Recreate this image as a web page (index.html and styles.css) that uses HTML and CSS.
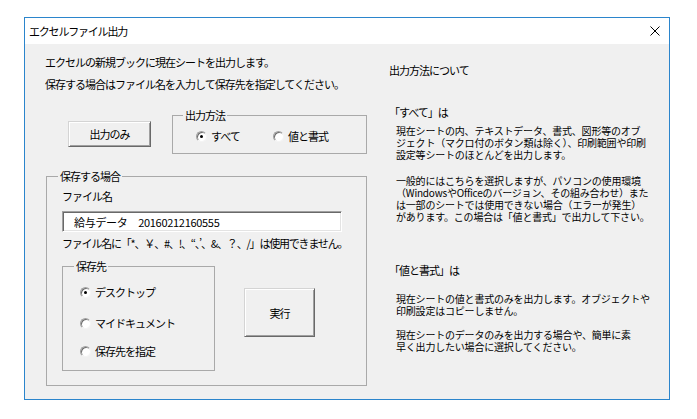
FILE: index.html
```html
<!DOCTYPE html>
<html lang="ja">
<head>
    <meta charset="UTF-8">
    <title>エクセルファイル出力</title>
    <link rel="stylesheet" href="styles.css">
</head>
<body>
    <div class="window">
        <div class="titlebar">
            <span class="title">エクセルファイル出力</span>
            <svg class="close" width="10" height="10" viewBox="0 0 10 10">
                <path d="M0.5 0.5L9.5 9.5M9.5 0.5L0.5 9.5" stroke="#000" stroke-width="1"/>
            </svg>
        </div>
        <div class="client">
            <div class="left">
                <p class="intro">エクセルの新規ブックに現在シートを出力します。<br>保存する場合はファイル名を入力して保存先を指定してください。</p>

                <div class="output-row">
                    <button class="btn btn-only">出力のみ</button>
                    <fieldset class="frame frame-method">
                        <legend>出力方法</legend>
                        <div class="method-options">
                            <label class="radio radio-all"><span class="dot checked"></span>すべて</label>
                            <label class="radio"><span class="dot"></span>値と書式</label>
                        </div>
                    </fieldset>
                </div>

                <fieldset class="frame frame-save">
                    <legend>保存する場合</legend>
                    <div class="save-body">
                        <div class="field-label">ファイル名</div>
                        <input class="filename" type="text" value="給与データ　20160212160555">
                        <div class="note">ファイル名に「*、￥、#、!、“、’、&amp;、？、/」は使用できません。</div>
                        <div class="dest-row">
                            <fieldset class="frame frame-dest">
                                <legend>保存先</legend>
                                <div class="dest-options">
                                    <label class="radio"><span class="dot checked"></span>デスクトップ</label>
                                    <label class="radio radio-docs"><span class="dot"></span>マイドキュメント</label>
                                    <label class="radio radio-pick"><span class="dot"></span>保存先を指定</label>
                                </div>
                            </fieldset>
                            <button class="btn btn-run">実行</button>
                        </div>
                    </div>
                </fieldset>
            </div>

            <div class="right">
                <div class="about-title">出力方法について</div>

                <div class="about-head head-all">「すべて」は</div>
                <p class="about-text text-first">現在シートの内、テキストデータ、書式、図形等のオブ<br>ジェクト（マクロ付のボタン類は除く）、印刷範囲や印刷<br>設定等シートのほとんどを出力します。</p>
                <p class="about-text text-second">一般的にはこちらを選択しますが、パソコンの使用環境<br>（WindowsやOfficeのバージョン、その組み合わせ）また<br>は一部のシートでは使用できない場合（エラーが発生）<br>があります。この場合は「値と書式」で出力して下さい。</p>

                <div class="about-head head-values">「値と書式」は</div>
                <p class="about-text text-third">現在シートの値と書式のみを出力します。オブジェクトや<br>印刷設定はコピーしません。</p>
                <p class="about-text text-fourth">現在シートのデータのみを出力する場合や、簡単に素<br>早く出力したい場合に選択してください。</p>
            </div>
        </div>
    </div>
</body>
</html>
```

FILE: styles.css
```css
body {
    margin: 0;
    background: #fff;
    font-family: "Noto Sans CJK JP", "Noto Sans", sans-serif;
    font-size: 11px;
    letter-spacing: -1px;
    color: #000;
}
.window {
    margin: 17px 0 0 24px;
    width: 646px;
    height: 383px;
    box-sizing: border-box;
    border: 1px solid #2b85cc;
    display: flex;
    flex-direction: column;
}
.titlebar {
    height: 26px;
    background: #fff;
    display: flex;
    align-items: center;
    justify-content: space-between;
    padding: 0 9px 0 4px;
}
.title {
    font-size: 11px;
    letter-spacing: -1.2px;
    line-height: 26px;
}
.close {
    display: block;
}
.client {
    flex: 1;
    background: #f0f0f0;
    display: flex;
}
.left {
    width: 345px;
    box-sizing: border-box;
    padding: 7px 0 0 20px;
}
.intro {
    margin: 0;
    line-height: 22px;
    white-space: nowrap;
}

/* frames */
.frame {
    margin: 0;
    padding: 0;
    min-width: 0;
    box-sizing: border-box;
    border: 1px solid #a9a9a9;
}
.frame legend {
    padding: 0 2px;
    line-height: 14px;
}

/* buttons */
.btn {
    box-sizing: border-box;
    background: #f0f0f0;
    font-family: inherit;
    font-size: 11px;
    letter-spacing: -1px;
    color: #000;
    border: 1px solid;
    border-color: #d4d4d4 #696969 #696969 #d4d4d4;
    box-shadow: inset 1px 1px 0 #fff, inset -1px -1px 0 #a0a0a0;
    padding: 0;
}

/* radio buttons */
.radio {
    display: flex;
    align-items: center;
    line-height: 14px;
    white-space: nowrap;
}
.dot {
    width: 11px;
    height: 11px;
    box-sizing: border-box;
    border-radius: 50%;
    border: 1px solid;
    border-color: #a0a0a0 #f4f4f4 #f4f4f4 #a0a0a0;
    box-shadow: inset 1px 1px 0 #6f6f6f;
    background: #fff;
    margin-right: 4px;
    position: relative;
}
.dot.checked::after {
    content: "";
    position: absolute;
    left: 3px;
    top: 3px;
    width: 3px;
    height: 3px;
    border-radius: 50%;
    background: #000;
}

.output-row {
    display: flex;
    align-items: flex-start;
    margin-top: 13px;
}
.btn-only {
    margin: 13px 0 0 23px;
    width: 83px;
    height: 26px;
}
.frame-method {
    margin-left: 21px;
    width: 195px;
    height: 46px;
}
.frame-method legend {
    margin-left: 10px;
}
.method-options {
    display: flex;
    padding: 7px 0 0 23px;
}
.radio-all {
    width: 77px;
}

.frame-save {
    margin: 15px 0 0 1px;
    width: 321px;
    height: 217px;
}
.frame-save legend {
    margin-left: 11px;
}
.save-body {
    padding: 6px 0 0 15px;
}
.field-label {
    line-height: 14px;
}
.filename {
    display: block;
    margin: 8px 0 0;
    width: 280px;
    height: 21px;
    box-sizing: border-box;
    padding: 0 0 0 11px;
    background: #fff;
    font-family: inherit;
    font-size: 11px;
    letter-spacing: -0.3px;
    color: #000;
    border: 1px solid;
    border-color: #a0a0a0 #fff #fff #a0a0a0;
    box-shadow: inset 1px 1px 0 #696969, inset -1px -1px 0 #e3e3e3;
    outline: none;
}
.note {
    margin-top: 4px;
    line-height: 14px;
    white-space: nowrap;
    letter-spacing: -1.2px;
}
.dest-row {
    display: flex;
    align-items: flex-start;
    margin-top: 9px;
}
.frame-dest {
    width: 153px;
    height: 112px;
}
.frame-dest legend {
    margin-left: 11px;
}
.dest-options {
    padding: 12px 0 0 17px;
}
.radio-docs {
    margin-top: 17px;
}
.radio-pick {
    margin-top: 14px;
}
.btn-run {
    margin: 29px 0 0 29px;
    width: 71px;
    height: 49px;
}

/* right column */
.right {
    flex: 1;
    padding: 19px 0 0 19px;
}
.about-title,
.about-head {
    line-height: 14px;
    white-space: nowrap;
}
.head-all {
    margin-top: 28px;
}
.about-text {
    margin: 0 0 0 7px;
    font-size: 10px;
    letter-spacing: -0.2px;
    line-height: 12px;
    white-space: nowrap;
}
.text-first {
    margin-top: 6px;
}
.text-second {
    margin-top: 14px;
}
.head-values {
    margin-top: 40px;
}
.text-third {
    margin-top: 16px;
}
.text-fourth {
    margin-top: 12px;
}
```
